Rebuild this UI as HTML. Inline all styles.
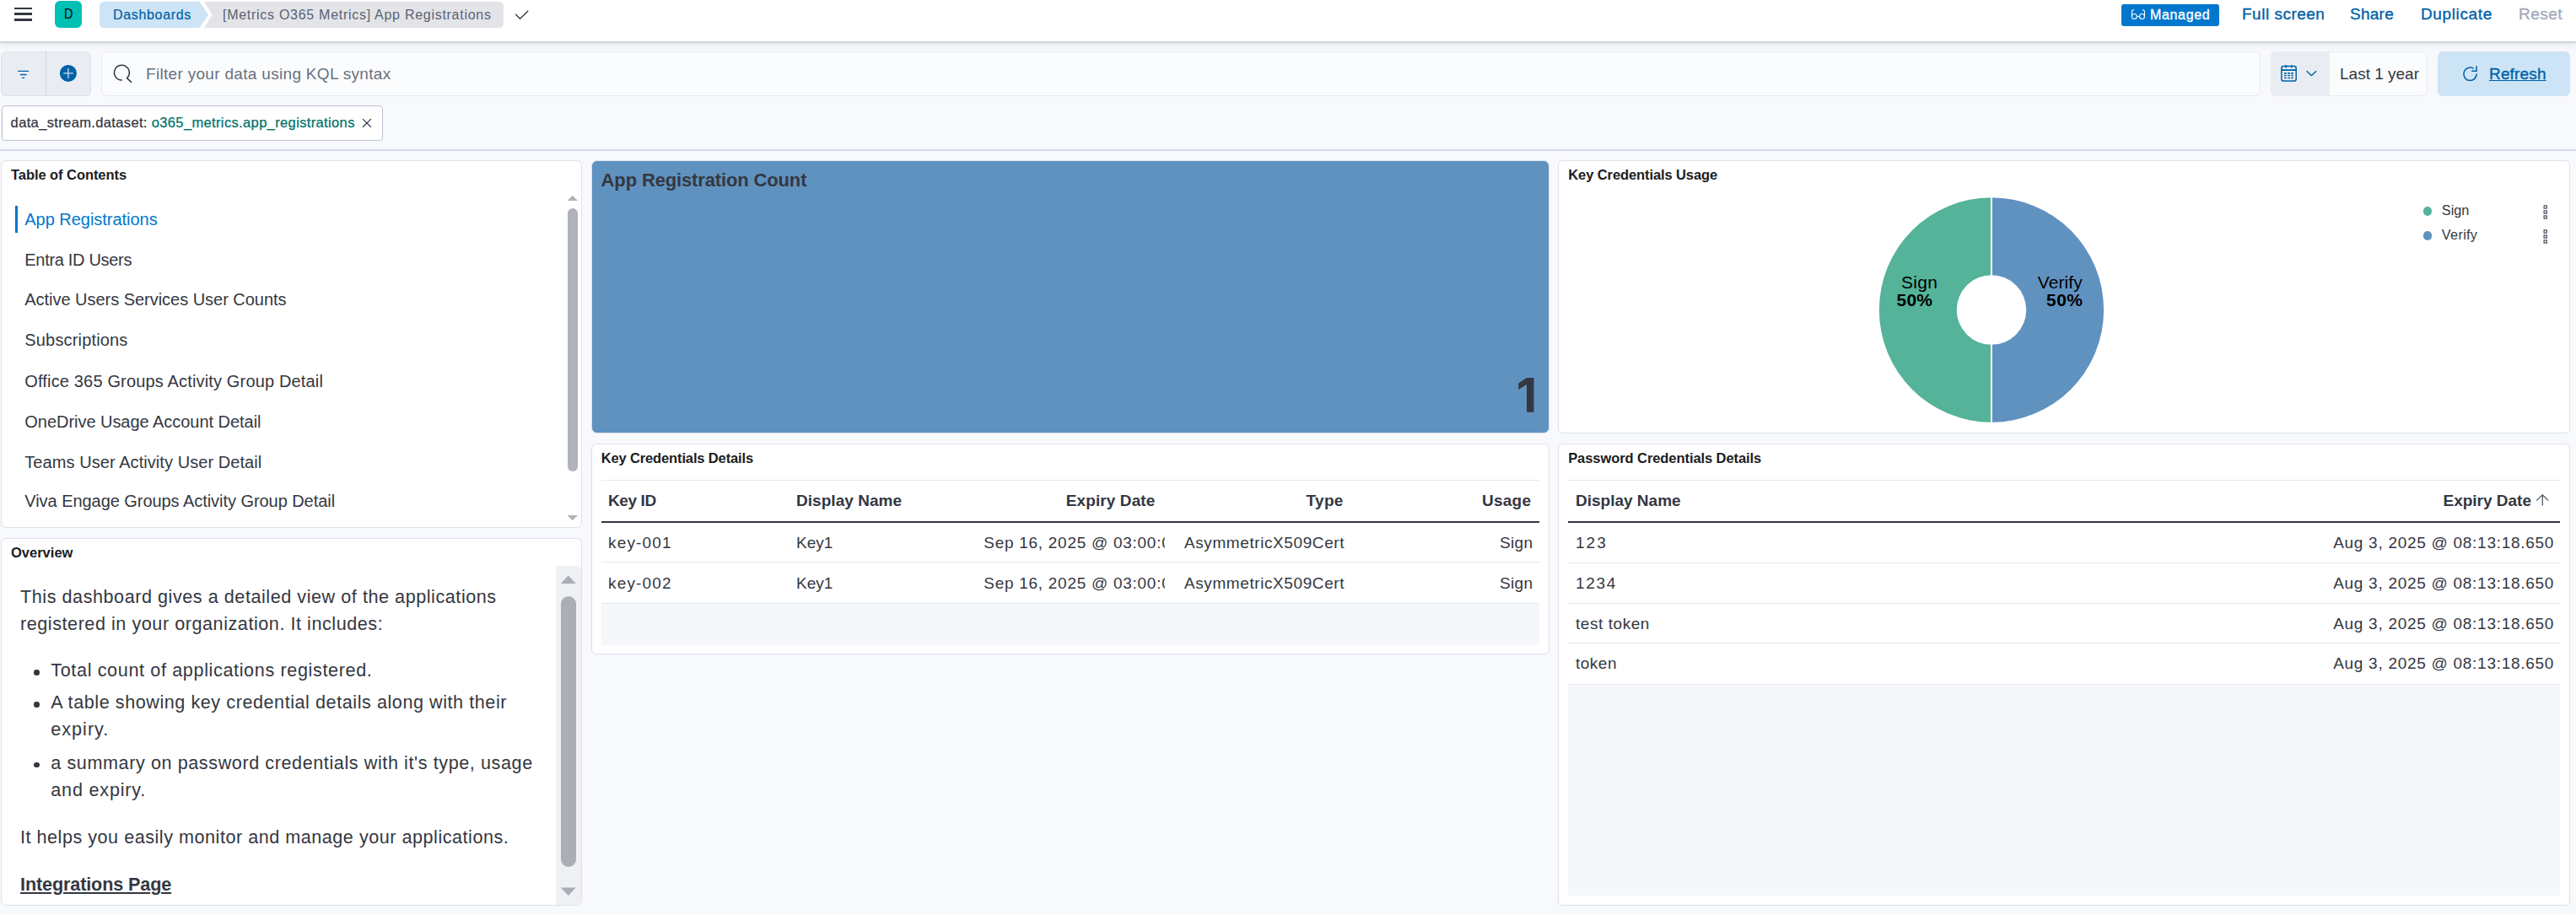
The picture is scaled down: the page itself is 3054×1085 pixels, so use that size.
<!DOCTYPE html>
<html><head><meta charset="utf-8"><title>App Registrations</title>
<style>
html,body{margin:0;padding:0;width:3054px;height:1085px;overflow:hidden;background:#F8F9FD;font-family:"Liberation Sans", sans-serif;}
div{box-sizing:border-box}
</style></head><body>
<div style="position:absolute;left:0px;top:0px;width:3054px;height:49px;background:#fff;box-shadow:0 1px 2px rgba(0,0,0,.14),0 3px 9px rgba(0,0,0,.07);border-bottom:1px solid #CDD3DF;box-sizing:content-box;z-index:2"></div>
<div style="position:absolute;left:0;top:0;width:3054px;height:49px;z-index:3">
<div style="position:absolute;left:17px;top:8.8px;width:21px;height:2.5999999999999996px;background:#343741;"></div>
<div style="position:absolute;left:17px;top:15.2px;width:21px;height:2.6000000000000014px;background:#343741;"></div>
<div style="position:absolute;left:17px;top:22.2px;width:21px;height:2.6000000000000014px;background:#343741;"></div>
<div style="position:absolute;left:65px;top:1px;width:32px;height:32px;background:#00BFB3;border-radius:6px"></div>
<div id="avD" style="position:absolute;left:75.5px;top:9.46px;font-size:16px;line-height:1;color:#000;font-weight:400;letter-spacing:0.000px;white-space:nowrap;transform:scaleX(0.9);transform-origin:0 0;">D</div>
<svg style="position:absolute;left:0;top:0" width="700" height="40"><path d="M124 2 H236.5 L247 17.5 L236.5 33 H124 Q118 33 118 27 V8 Q118 2 124 2 Z" fill="#CCE4F5"/><path d="M242 2 H591 Q597 2 597 8 V27 Q597 33 591 33 H242 L251.5 17.5 Z" fill="#E3E4E8"/><path d="M611.2 16.8 L616.5 22.3 L626.2 12.7" fill="none" stroke="#343741" stroke-width="1.25"/></svg>
<div id="bc1" style="position:absolute;left:134px;top:9.96px;font-size:16px;line-height:1;color:#0061A6;font-weight:400;letter-spacing:0.667px;white-space:nowrap;-webkit-text-stroke:0.2px currentColor;">Dashboards</div>
<div id="bc2" style="position:absolute;left:264px;top:10.36px;font-size:16px;line-height:1;color:#5A6273;font-weight:400;letter-spacing:0.718px;white-space:nowrap;">[Metrics O365 Metrics] App Registrations</div>
<div style="position:absolute;left:2515px;top:5px;width:116px;height:26px;background:#0077CC;border-radius:3px"></div>
<svg style="position:absolute;left:2520px;top:6px" width="30" height="22"><g fill="none" stroke="#fff" stroke-width="1.05"><circle cx="10.4" cy="13.5" r="3.0"/><circle cx="19.5" cy="13.5" r="3.0"/><path d="M13.4 13.6 H16.5"/><path d="M7.4 13.5 V8.2 Q7.4 5.9 9.9 5.6"/><path d="M22.5 13.5 V8.2 Q22.5 5.9 20.1 5.6"/></g></svg>
<div id="mng" style="position:absolute;left:2549px;top:9.56px;font-size:16px;line-height:1;color:#fff;font-weight:400;letter-spacing:0.666px;white-space:nowrap;-webkit-text-stroke:0.35px currentColor;">Managed</div>
<div id="hl1" style="position:absolute;left:2658px;top:7.02px;font-size:19px;line-height:1;color:#0061A6;font-weight:400;letter-spacing:0.500px;white-space:nowrap;-webkit-text-stroke:0.35px currentColor;">Full screen</div>
<div id="hl2" style="position:absolute;left:2786px;top:7.02px;font-size:19px;line-height:1;color:#0061A6;font-weight:400;letter-spacing:0.250px;white-space:nowrap;-webkit-text-stroke:0.35px currentColor;">Share</div>
<div id="hl3" style="position:absolute;left:2870px;top:7.02px;font-size:19px;line-height:1;color:#0061A6;font-weight:400;letter-spacing:0.625px;white-space:nowrap;-webkit-text-stroke:0.35px currentColor;">Duplicate</div>
<div id="hl4" style="position:absolute;left:2986px;top:7.02px;font-size:19px;line-height:1;color:#A2ABBA;font-weight:400;letter-spacing:0.500px;white-space:nowrap;-webkit-text-stroke:0.35px currentColor;">Reset</div>
</div>
<div style="position:absolute;left:0px;top:50px;width:3054px;height:1035px;background:#F8F9FD;"></div>
<div style="position:absolute;left:1px;top:61px;width:107px;height:53px;background:#E9EDF3;border-radius:6px;box-shadow:inset 0 0 0 1px rgba(32,38,47,.06)"></div>
<div style="position:absolute;left:54px;top:61px;width:1px;height:53px;background:rgba(32,38,47,.1);"></div>
<svg style="position:absolute;left:10px;top:70px" width="40" height="35"><g stroke="#0061A6" stroke-width="1.35" stroke-linecap="round"><path d="M11.7 14.4 H23.5"/><path d="M14.4 18.5 H21"/><path d="M16.6 22.4 H18.6"/></g></svg>
<svg style="position:absolute;left:10px;top:70px" width="90" height="35"><circle cx="70.9" cy="16.9" r="10" fill="#0061A6"/><path d="M70.9 11.1 V23 M65 16.8 H76.9" stroke="#C8DEF1" stroke-width="1.3"/></svg>
<div style="position:absolute;left:120px;top:61px;width:2560px;height:53px;background:#FBFCFD;border-radius:6px;box-shadow:inset 0 0 0 1px rgba(32,38,47,.08);box-sizing:border-box"></div>
<svg style="position:absolute;left:125px;top:70px" width="40" height="35"><path d="M19.3 25 A8.9 8.9 0 1 1 25.5 22.6 L30.6 27.4" fill="none" stroke="#343741" stroke-width="1.5" stroke-linecap="round" stroke-linejoin="round"/></svg>
<div id="ph" style="position:absolute;left:173px;top:78.22px;font-size:19px;line-height:1;color:#69707D;font-weight:400;letter-spacing:0.312px;white-space:nowrap;">Filter your data using KQL syntax</div>
<div style="position:absolute;left:2692px;top:61px;width:186px;height:53px;background:#FBFCFD;border-radius:6px;box-shadow:inset 0 0 0 1px rgba(32,38,47,.08)"></div>
<div style="position:absolute;left:2692px;top:61px;width:70px;height:53px;background:#E9EDF3;border-radius:6px 0 0 6px"></div>
<svg style="position:absolute;left:2695px;top:70px" width="60" height="35"><g fill="none" stroke="#0061A6" stroke-width="1.5"><rect x="9.9" y="8.5" width="17.3" height="17.6" rx="2.4"/><path d="M9.9 13.1 H27.2" stroke-width="1.8"/><path d="M15.3 7.1 V10.6 M22 7.1 V10.6"/><path d="M39.6 14.2 L45.4 19.6 L51.2 14.2" stroke-width="1.4"/></g><g fill="#0061A6"><rect x="13" y="16" width="2.7" height="1.8"/><rect x="17.2" y="16" width="2.7" height="1.8"/><rect x="21.2" y="16" width="2.7" height="1.8"/><rect x="13" y="18.9" width="2.7" height="1.4"/><rect x="17.2" y="18.9" width="2.7" height="1.4"/><rect x="21.2" y="18.9" width="2.7" height="1.4"/><rect x="13" y="21.8" width="2.7" height="1.4"/><rect x="17.2" y="21.8" width="2.7" height="1.4"/><rect x="21.2" y="21.8" width="2.7" height="1.4"/></g></svg>
<div id="ly" style="position:absolute;left:2774px;top:77.62px;font-size:19px;line-height:1;color:#343741;font-weight:400;letter-spacing:0.000px;white-space:nowrap;">Last 1 year</div>
<div style="position:absolute;left:2890px;top:61px;width:157px;height:53px;background:#CCE4F5;border-radius:6px"></div>
<svg style="position:absolute;left:2910px;top:70px" width="40" height="35"><g fill="none" stroke="#0061A6" stroke-width="1.5"><path d="M22.6 11.3 A7.65 7.65 0 1 0 26.15 17.6"/><path d="M26 8.2 V14.3 H20.3"/></g></svg>
<div id="rf" style="position:absolute;left:2951px;top:77.62px;font-size:19px;line-height:1;color:#0061A6;font-weight:400;letter-spacing:0.167px;white-space:nowrap;-webkit-text-stroke:0.35px currentColor;text-decoration:underline;text-underline-offset:1px">Refresh</div>
<div style="position:absolute;left:1.5px;top:125px;width:452.5px;height:41.5px;background:#fff;border:1px solid #B9C1CE;border-radius:4px;box-sizing:border-box"></div>
<div id="fp" style="position:absolute;left:12.6px;top:137.03px;font-size:16.5px;line-height:1;color:#343741;font-weight:400;letter-spacing:0.360px;white-space:nowrap;-webkit-text-stroke:0.25px currentColor;">data_stream.dataset: <span style="color:#00726B">o365_metrics.app_registrations</span></div>
<svg style="position:absolute;left:425px;top:136px" width="20" height="20"><path d="M5.3 5.3 L14.6 14.5 M14.6 5.3 L5.3 14.5" stroke="#343741" stroke-width="1.15" stroke-linecap="round"/></svg>
<div style="position:absolute;left:0px;top:177px;width:3054px;height:2px;background:#D3DAE6;"></div>
<div style="position:absolute;left:1px;top:190px;width:688.5px;height:436px;background:;background:#fff;border:1px solid #DCE1EA;border-radius:6px;box-sizing:border-box"></div>
<div style="position:absolute;left:1px;top:638px;width:688.5px;height:436px;background:;background:#fff;border:1px solid #DCE1EA;border-radius:6px;box-sizing:border-box"></div>
<div style="position:absolute;left:701px;top:190px;width:1135.5px;height:323.5px;background:#6092C0;border:1px solid #DCE1EA;border-radius:7px;box-sizing:border-box"></div>
<div style="position:absolute;left:1847px;top:190px;width:1200px;height:323.5px;background:;background:#fff;border:1px solid #DCE1EA;border-radius:6px;box-sizing:border-box"></div>
<div style="position:absolute;left:701px;top:526px;width:1135.5px;height:250px;background:;background:#fff;border:1px solid #DCE1EA;border-radius:6px;box-sizing:border-box"></div>
<div style="position:absolute;left:1847px;top:526px;width:1200px;height:548px;background:;background:#fff;border:1px solid #DCE1EA;border-radius:6px;box-sizing:border-box"></div>
<div id="t_toc" style="position:absolute;left:13px;top:199.43px;font-size:16.5px;line-height:1;color:#1A1C21;font-weight:700;letter-spacing:-0.062px;white-space:nowrap;">Table of Contents</div>
<div style="position:absolute;left:18px;top:244px;width:3px;height:32px;background:#0077CC;"></div>
<div id="toc0" style="position:absolute;left:29.3px;top:250.07px;font-size:20.0px;line-height:1;color:#0077CC;font-weight:400;letter-spacing:-0.032px;white-space:nowrap;">App Registrations</div>
<div id="toc1" style="position:absolute;left:29.3px;top:297.77px;font-size:20.0px;line-height:1;color:#343741;font-weight:400;letter-spacing:-0.308px;white-space:nowrap;">Entra ID Users</div>
<div id="toc2" style="position:absolute;left:29.3px;top:345.27px;font-size:20.0px;line-height:1;color:#343741;font-weight:400;letter-spacing:-0.031px;white-space:nowrap;">Active Users Services User Counts</div>
<div id="toc3" style="position:absolute;left:29.3px;top:393.37px;font-size:20.0px;line-height:1;color:#343741;font-weight:400;letter-spacing:0.167px;white-space:nowrap;">Subscriptions</div>
<div id="toc4" style="position:absolute;left:29.3px;top:441.67px;font-size:20.0px;line-height:1;color:#343741;font-weight:400;letter-spacing:0.158px;white-space:nowrap;">Office 365 Groups Activity Group Detail</div>
<div id="toc5" style="position:absolute;left:29.3px;top:490.07px;font-size:20.0px;line-height:1;color:#343741;font-weight:400;letter-spacing:-0.036px;white-space:nowrap;">OneDrive Usage Account Detail</div>
<div id="toc6" style="position:absolute;left:29.3px;top:537.67px;font-size:20.0px;line-height:1;color:#343741;font-weight:400;letter-spacing:0.067px;white-space:nowrap;">Teams User Activity User Detail</div>
<div id="toc7" style="position:absolute;left:29.3px;top:584.37px;font-size:20.0px;line-height:1;color:#343741;font-weight:400;letter-spacing:-0.052px;white-space:nowrap;">Viva Engage Groups Activity Group Detail</div>
<svg style="position:absolute;left:672px;top:231px" width="14" height="8"><path d="M0.5 7 L6.75 0.8 L13 7 Z" fill="#B0B3BB"/></svg>
<div style="position:absolute;left:673px;top:246.5px;width:11.700000000000045px;height:312.0px;background:#B0B3BB;border-radius:6px"></div>
<svg style="position:absolute;left:672px;top:610px" width="14" height="8"><path d="M0.5 1 L6.75 7.2 L13 1 Z" fill="#B0B3BB"/></svg>
<div id="t_ov" style="position:absolute;left:13px;top:647.33px;font-size:16.5px;line-height:1;color:#1A1C21;font-weight:700;letter-spacing:0.001px;white-space:nowrap;">Overview</div>
<div style="position:absolute;left:659px;top:671px;width:29.5px;height:402px;background:#EFF0F3;border-radius:0 6px 6px 0"></div>
<svg style="position:absolute;left:664px;top:682px" width="20" height="11"><path d="M0.8 10 L9.8 0.6 L18.8 10 Z" fill="#ABAEB6"/></svg>
<div style="position:absolute;left:665px;top:707px;width:17.700000000000045px;height:320.5px;background:#ABAEB6;border-radius:9px"></div>
<svg style="position:absolute;left:664px;top:1052px" width="20" height="11"><path d="M0.8 0.6 L9.8 10 L18.8 0.6 Z" fill="#ABAEB6"/></svg>
<div id="ov1" style="position:absolute;left:24px;top:696.52px;font-size:21.6px;line-height:1;color:#343741;font-weight:400;letter-spacing:0.545px;white-space:nowrap;">This dashboard gives a detailed view of the applications</div>
<div id="ov2" style="position:absolute;left:24px;top:728.52px;font-size:21.6px;line-height:1;color:#343741;font-weight:400;letter-spacing:0.545px;white-space:nowrap;">registered in your organization. It includes:</div>
<div style="position:absolute;left:40.3px;top:794.4px;width:6.5px;height:6.5px;background:#343741;border-radius:50%"></div>
<div style="position:absolute;left:40.3px;top:832.4px;width:6.5px;height:6.5px;background:#343741;border-radius:50%"></div>
<div style="position:absolute;left:40.3px;top:903.8px;width:6.5px;height:6.5px;background:#343741;border-radius:50%"></div>
<div id="ov3" style="position:absolute;left:60.3px;top:784.32px;font-size:21.6px;line-height:1;color:#343741;font-weight:400;letter-spacing:0.631px;white-space:nowrap;">Total count of applications registered.</div>
<div id="ov4" style="position:absolute;left:60.3px;top:822.32px;font-size:21.6px;line-height:1;color:#343741;font-weight:400;letter-spacing:0.556px;white-space:nowrap;">A table showing key credential details along with their</div>
<div id="ov5" style="position:absolute;left:60.3px;top:854.32px;font-size:21.6px;line-height:1;color:#343741;font-weight:400;letter-spacing:1.000px;white-space:nowrap;">expiry.</div>
<div id="ov6" style="position:absolute;left:60.3px;top:893.72px;font-size:21.6px;line-height:1;color:#343741;font-weight:400;letter-spacing:0.583px;white-space:nowrap;">a summary on password credentials with it&#x27;s type, usage</div>
<div id="ov7" style="position:absolute;left:60.3px;top:925.52px;font-size:21.6px;line-height:1;color:#343741;font-weight:400;letter-spacing:0.800px;white-space:nowrap;">and expiry.</div>
<div id="ov8" style="position:absolute;left:24px;top:981.52px;font-size:21.6px;line-height:1;color:#343741;font-weight:400;letter-spacing:0.518px;white-space:nowrap;">It helps you easily monitor and manage your applications.</div>
<div id="ov9" style="position:absolute;left:24px;top:1037.72px;font-size:21.6px;line-height:1;color:#343741;font-weight:700;letter-spacing:-0.124px;white-space:nowrap;text-decoration:underline;text-underline-offset:2px">Integrations Page</div>
<div id="t_arc" style="position:absolute;left:712.6px;top:202.68px;font-size:22px;line-height:1;color:#343741;font-weight:700;letter-spacing:-0.143px;white-space:nowrap;">App Registration Count</div>
<svg style="position:absolute;left:0;top:0" width="1900" height="500"><path d="M1800.2 454.4 L1810 448.1 H1818.5 V488.8 H1810 V456 L1800.2 462 Z" fill="#343741"/></svg>
<div id="t_kcu" style="position:absolute;left:1859.3px;top:199.33px;font-size:16.5px;line-height:1;color:#1A1C21;font-weight:700;letter-spacing:-0.100px;white-space:nowrap;">Key Credentials Usage</div>
<svg style="position:absolute;left:0;top:0;width:3054px;height:1085px;pointer-events:none" width="3054" height="1085"><path d="M2361 234.3 A133.2 133.2 0 0 0 2361 500.7 L2361 408.8 A41.3 41.3 0 0 1 2361 326.2 Z" fill="#54B399"/><path d="M2361 234.3 A133.2 133.2 0 0 1 2361 500.7 L2361 408.8 A41.3 41.3 0 0 0 2361 326.2 Z" fill="#6092C0"/><path d="M2361 233.3 V501.7" stroke="#fff" stroke-width="2"/></svg>
<div id="pl1" style="position:absolute;left:2254px;top:324.22px;font-size:21px;line-height:1;color:#000;font-weight:400;letter-spacing:0.333px;white-space:nowrap;">Sign</div>
<div id="pl2" style="position:absolute;left:2248.5px;top:344.82px;font-size:21px;line-height:1;color:#000;font-weight:700;letter-spacing:0.250px;white-space:nowrap;">50%</div>
<div id="pl3" style="position:absolute;left:2415.7px;top:324.22px;font-size:21px;line-height:1;color:#000;font-weight:400;letter-spacing:0.100px;white-space:nowrap;">Verify</div>
<div id="pl4" style="position:absolute;left:2426px;top:344.82px;font-size:21px;line-height:1;color:#000;font-weight:700;letter-spacing:0.500px;white-space:nowrap;">50%</div>
<div style="position:absolute;left:2872.6px;top:245px;width:10.700000000000273px;height:10.699999999999989px;background:#54B399;border-radius:50%"></div>
<div style="position:absolute;left:2872.6px;top:274px;width:10.700000000000273px;height:10.699999999999989px;background:#6092C0;border-radius:50%"></div>
<div id="lg1" style="position:absolute;left:2894.8px;top:241.20px;font-size:16.3px;line-height:1;color:#343741;font-weight:400;letter-spacing:0.000px;white-space:nowrap;">Sign</div>
<div id="lg2" style="position:absolute;left:2894.8px;top:270.20px;font-size:16.3px;line-height:1;color:#343741;font-weight:400;letter-spacing:0.300px;white-space:nowrap;">Verify</div>
<svg style="position:absolute;left:3014.5px;top:242.7px" width="6" height="17"><g fill="none" stroke="#4A4F5C" stroke-width="1.2"><rect x="1.1" y="0.9" width="3.2" height="3.2"/><rect x="1.1" y="6.9" width="3.2" height="3.2"/><rect x="1.1" y="12.9" width="3.2" height="3.2"/></g></svg>
<svg style="position:absolute;left:3014.5px;top:271.8px" width="6" height="17"><g fill="none" stroke="#4A4F5C" stroke-width="1.2"><rect x="1.1" y="0.9" width="3.2" height="3.2"/><rect x="1.1" y="6.9" width="3.2" height="3.2"/><rect x="1.1" y="12.9" width="3.2" height="3.2"/></g></svg>
<div id="t_kcd" style="position:absolute;left:712.7px;top:535.03px;font-size:16.5px;line-height:1;color:#1A1C21;font-weight:700;letter-spacing:-0.136px;white-space:nowrap;">Key Credentials Details</div>
<div style="position:absolute;left:712.7px;top:569px;width:1112.3px;height:1px;background:#E3E8F2;"></div>
<div id="kh1" style="position:absolute;left:721px;top:583.92px;font-size:19px;line-height:1;color:#343741;font-weight:700;letter-spacing:-0.400px;white-space:nowrap;">Key ID</div>
<div id="kh2" style="position:absolute;left:944px;top:583.92px;font-size:19px;line-height:1;color:#343741;font-weight:700;letter-spacing:0.045px;white-space:nowrap;">Display Name</div>
<div id="kh3" style="position:absolute;right:1684.7px;text-align:right;margin-right:-0.100px;top:583.92px;font-size:19px;line-height:1;color:#343741;font-weight:700;letter-spacing:0.100px;white-space:nowrap;">Expiry Date</div>
<div id="kh4" style="position:absolute;right:1461.6px;text-align:right;margin-right:-0.333px;top:583.92px;font-size:19px;line-height:1;color:#343741;font-weight:700;letter-spacing:0.333px;white-space:nowrap;">Type</div>
<div id="kh5" style="position:absolute;right:1239px;text-align:right;margin-right:-0.250px;top:583.92px;font-size:19px;line-height:1;color:#343741;font-weight:700;letter-spacing:0.250px;white-space:nowrap;">Usage</div>
<div style="position:absolute;left:712.7px;top:617.5px;width:1112.3px;height:2.0px;background:#343741;"></div>
<div id="kr001a" style="position:absolute;left:721px;top:634.12px;font-size:19px;line-height:1;color:#343741;font-weight:400;letter-spacing:1.167px;white-space:nowrap;">key-001</div>
<div id="kr001b" style="position:absolute;left:944px;top:634.12px;font-size:19px;line-height:1;color:#343741;font-weight:400;letter-spacing:0.000px;white-space:nowrap;">Key1</div>
<div style="position:absolute;left:1158px;top:630.2px;width:223px;height:28px;overflow:hidden">
<div id="kr001c" style="position:absolute;left:8.3px;top:3.92px;font-size:19px;line-height:1;color:#343741;font-weight:400;letter-spacing:0.720px;white-space:nowrap;">Sep 16, 2025 @ 03:00:00.000</div>
</div>
<div id="kr001d" style="position:absolute;left:1404px;top:634.12px;font-size:19px;line-height:1;color:#343741;font-weight:400;letter-spacing:0.588px;white-space:nowrap;">AsymmetricX509Cert</div>
<div id="kr001e" style="position:absolute;right:1237px;text-align:right;margin-right:-0.333px;top:634.12px;font-size:19px;line-height:1;color:#343741;font-weight:400;letter-spacing:0.333px;white-space:nowrap;">Sign</div>
<div style="position:absolute;left:712.7px;top:666.4px;width:1112.3px;height:1.0px;background:#E3E8F2;"></div>
<div id="kr002a" style="position:absolute;left:721px;top:681.92px;font-size:19px;line-height:1;color:#343741;font-weight:400;letter-spacing:1.167px;white-space:nowrap;">key-002</div>
<div id="kr002b" style="position:absolute;left:944px;top:681.92px;font-size:19px;line-height:1;color:#343741;font-weight:400;letter-spacing:0.000px;white-space:nowrap;">Key1</div>
<div style="position:absolute;left:1158px;top:678px;width:223px;height:28px;overflow:hidden">
<div id="kr002c" style="position:absolute;left:8.3px;top:3.92px;font-size:19px;line-height:1;color:#343741;font-weight:400;letter-spacing:0.720px;white-space:nowrap;">Sep 16, 2025 @ 03:00:00.000</div>
</div>
<div id="kr002d" style="position:absolute;left:1404px;top:681.92px;font-size:19px;line-height:1;color:#343741;font-weight:400;letter-spacing:0.588px;white-space:nowrap;">AsymmetricX509Cert</div>
<div id="kr002e" style="position:absolute;right:1237px;text-align:right;margin-right:-0.333px;top:681.92px;font-size:19px;line-height:1;color:#343741;font-weight:400;letter-spacing:0.333px;white-space:nowrap;">Sign</div>
<div style="position:absolute;left:712.7px;top:714.5px;width:1112.3px;height:1.0px;background:#E3E8F2;"></div>
<div style="position:absolute;left:712.7px;top:715.5px;width:1112.3px;height:49.0px;background:#F5F7FA;"></div>
<div id="t_pcd" style="position:absolute;left:1859.2px;top:534.53px;font-size:16.5px;line-height:1;color:#1A1C21;font-weight:700;letter-spacing:-0.074px;white-space:nowrap;">Password Credentials Details</div>
<div style="position:absolute;left:1859.2px;top:569px;width:1175.8px;height:1px;background:#E3E8F2;"></div>
<div id="ph1" style="position:absolute;left:1868px;top:584.12px;font-size:19px;line-height:1;color:#343741;font-weight:700;letter-spacing:0.000px;white-space:nowrap;">Display Name</div>
<div id="ph2" style="position:absolute;right:53px;text-align:right;margin-right:-0.000px;top:584.12px;font-size:19px;line-height:1;color:#343741;font-weight:700;letter-spacing:0.000px;white-space:nowrap;">Expiry Date</div>
<svg style="position:absolute;left:3000px;top:580px" width="30" height="25"><path d="M14.3 6.8 V19.4 M7.2 13.6 L14.3 6.8 L21.4 13.6" fill="none" stroke="#4A5060" stroke-width="1.25"/></svg>
<div style="position:absolute;left:1859.2px;top:617.5px;width:1175.8px;height:2.0px;background:#343741;"></div>
<div id="pr0a" style="position:absolute;left:1868px;top:633.92px;font-size:19px;line-height:1;color:#343741;font-weight:400;letter-spacing:2.000px;white-space:nowrap;">123</div>
<div id="pr0b" style="position:absolute;right:26.59999999999991px;text-align:right;margin-right:-0.720px;top:633.92px;font-size:19px;line-height:1;color:#343741;font-weight:400;letter-spacing:0.720px;white-space:nowrap;">Aug 3, 2025 @ 08:13:18.650</div>
<div style="position:absolute;left:1859.2px;top:666.6px;width:1175.8px;height:1.0px;background:#E3E8F2;"></div>
<div id="pr1a" style="position:absolute;left:1868px;top:681.92px;font-size:19px;line-height:1;color:#343741;font-weight:400;letter-spacing:1.667px;white-space:nowrap;">1234</div>
<div id="pr1b" style="position:absolute;right:26.59999999999991px;text-align:right;margin-right:-0.720px;top:681.92px;font-size:19px;line-height:1;color:#343741;font-weight:400;letter-spacing:0.720px;white-space:nowrap;">Aug 3, 2025 @ 08:13:18.650</div>
<div style="position:absolute;left:1859.2px;top:715px;width:1175.8px;height:1px;background:#E3E8F2;"></div>
<div id="pr2a" style="position:absolute;left:1868px;top:729.92px;font-size:19px;line-height:1;color:#343741;font-weight:400;letter-spacing:0.556px;white-space:nowrap;">test token</div>
<div id="pr2b" style="position:absolute;right:26.59999999999991px;text-align:right;margin-right:-0.720px;top:729.92px;font-size:19px;line-height:1;color:#343741;font-weight:400;letter-spacing:0.720px;white-space:nowrap;">Aug 3, 2025 @ 08:13:18.650</div>
<div style="position:absolute;left:1859.2px;top:762.4px;width:1175.8px;height:1.0px;background:#E3E8F2;"></div>
<div id="pr3a" style="position:absolute;left:1868px;top:777.12px;font-size:19px;line-height:1;color:#343741;font-weight:400;letter-spacing:0.500px;white-space:nowrap;">token</div>
<div id="pr3b" style="position:absolute;right:26.59999999999991px;text-align:right;margin-right:-0.720px;top:777.12px;font-size:19px;line-height:1;color:#343741;font-weight:400;letter-spacing:0.720px;white-space:nowrap;">Aug 3, 2025 @ 08:13:18.650</div>
<div style="position:absolute;left:1859.2px;top:810.7px;width:1175.8px;height:1.0px;background:#E3E8F2;"></div>
<div style="position:absolute;left:1859.2px;top:811.5px;width:1175.8px;height:250.5px;background:#F5F7FA;"></div>
</body></html>
